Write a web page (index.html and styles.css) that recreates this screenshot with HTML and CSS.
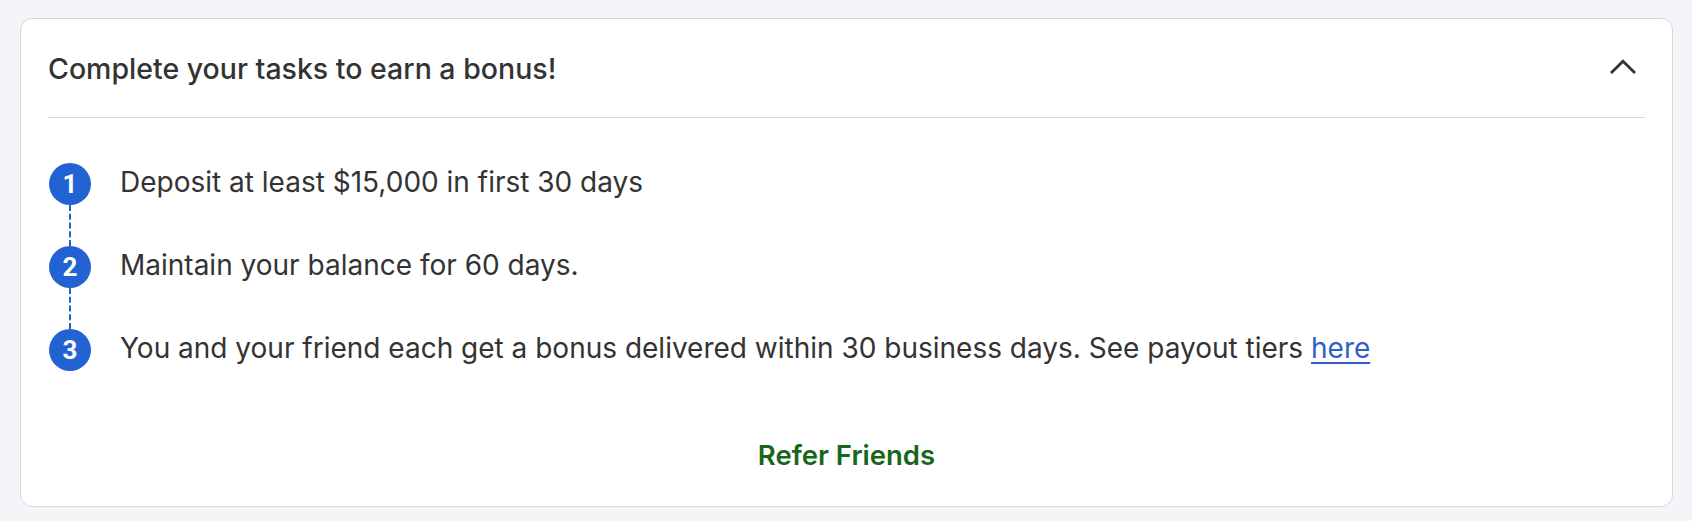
FILE: index.html
```html
<!DOCTYPE html>
<html lang="en">
<head>
<meta charset="utf-8">
<title>Bonus tasks</title>
<link rel="stylesheet" href="styles.css">
</head>
<body>
<section class="card">
  <header class="card-header">
    <h2 class="title">Complete your tasks to earn a bonus!</h2>
    <button class="toggle" aria-label="Collapse">
      <svg width="28" height="16" viewBox="0 0 28 16" aria-hidden="true"><path d="M2 14 L14 2.2 L26 14" fill="none" stroke="#333" stroke-width="2.8"/></svg>
    </button>
  </header>
  <ol class="steps">
    <li class="step">
      <div class="marker"><span class="num">1</span><span class="line"></span></div>
      <p class="step-text">Deposit at least $15,000 in first 30 days</p>
    </li>
    <li class="step">
      <div class="marker"><span class="num">2</span><span class="line"></span></div>
      <p class="step-text">Maintain your balance for 60 days.</p>
    </li>
    <li class="step last">
      <div class="marker"><span class="num">3</span></div>
      <p class="step-text">You and your friend each get a bonus delivered within 30 business days. See payout tiers <a href="#" class="link">here</a></p>
    </li>
  </ol>
  <div class="actions">
    <a href="#" class="refer">Refer Friends</a>
  </div>
</section>
</body>
</html>
```
FILE: styles.css
```css
html, body {
  margin: 0;
  padding: 0;
  background: #f5f5f9;
}
body {
  padding: 18px 19px 16px 20px;
  font-family: Inter, "Noto Sans", sans-serif;
  color: #333333;
}
.card {
  background: #ffffff;
  border: 1px solid #d6d6dc;
  border-radius: 12px;
  padding: 0 27px;
}
.card-header {
  height: 96px;
  padding-top: 2px;
  display: flex;
  align-items: center;
  justify-content: space-between;
  border-bottom: 1px solid #d9d9de;
}
.title {
  margin: 0;
  font-size: 28.5px;
  font-weight: 500;
  color: #333333;
  line-height: 1.2;
}
.toggle {
  border: 0;
  background: none;
  padding: 0;
  margin: -4px 8px 0 0;
  display: flex;
}
.steps {
  list-style: none;
  margin: 0;
  padding: 45px 0 0 1px;
}
.step {
  display: flex;
  gap: 29px;
  height: 83px;
}
.step.last {
  height: 42px;
}
.marker {
  display: flex;
  flex-direction: column;
  align-items: center;
  width: 42px;
}
.num {
  width: 42px;
  height: 42px;
  border-radius: 50%;
  background: #2262d3;
  color: #ffffff;
  font-family: Roboto, Inter, sans-serif;
  font-weight: 700;
  font-size: 26px;
  display: flex;
  align-items: center;
  justify-content: center;
  flex: none;
}
.line {
  flex: 1;
  width: 0;
  border-left: 2px dashed #2262d3;
}
.step-text {
  margin: 0;
  height: 42px;
  padding-bottom: 4px;
  box-sizing: border-box;
  display: flex;
  align-items: center;
  font-size: 28px;
  line-height: 1;
  white-space: pre;
}
.link {
  color: #2f5fc6;
  text-decoration: underline;
  text-underline-offset: 4px;
}
.actions {
  display: flex;
  justify-content: center;
  padding: 68px 0 35px;
}
.refer {
  color: #17661b;
  font-weight: 600;
  font-size: 27.5px;
  text-decoration: none;
  line-height: 32px;
}
```
